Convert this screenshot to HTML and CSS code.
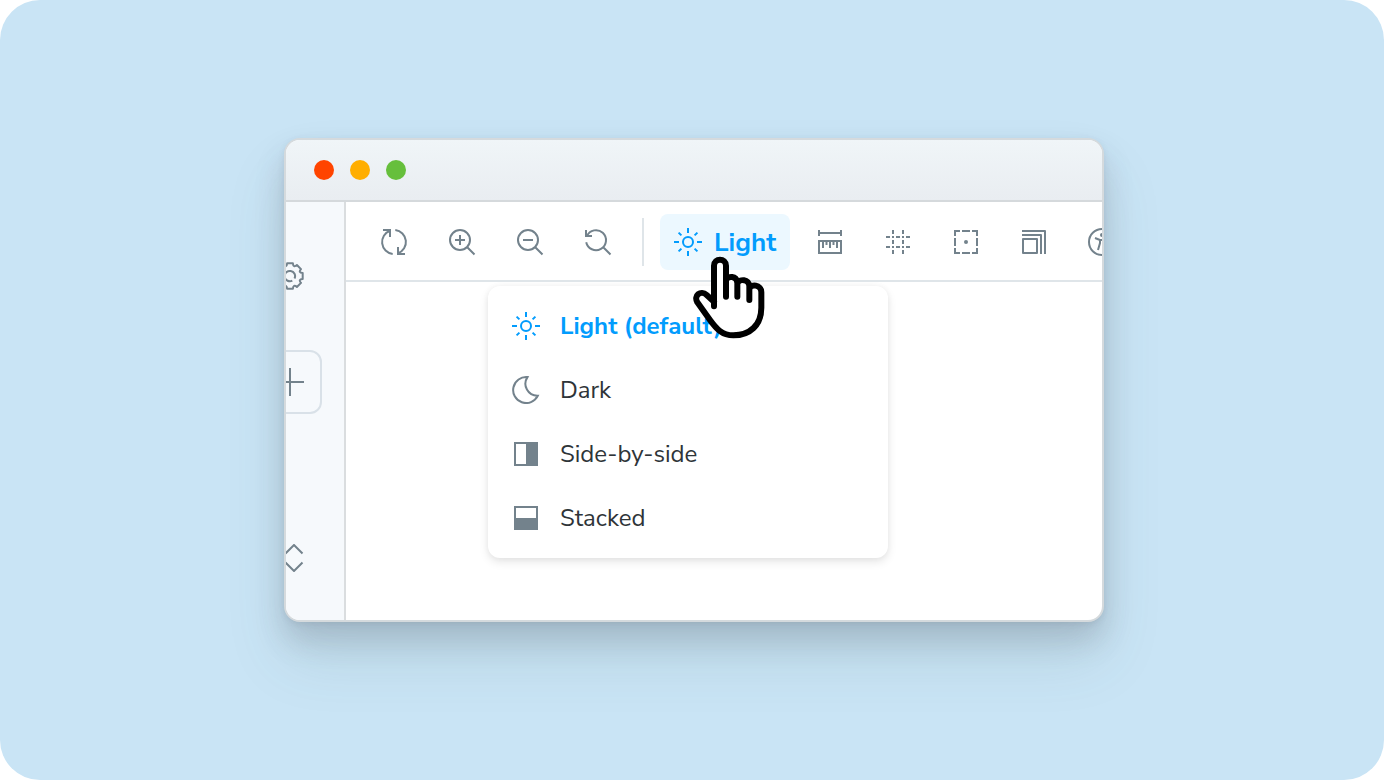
FILE: index.html
```html
<!DOCTYPE html>
<html lang="en">
<head>
<meta charset="utf-8">
<title>Theme switcher</title>
<link rel="stylesheet" href="styles.css">
</head>
<body>
<svg class="sprite" aria-hidden="true">
  <symbol id="sun" viewBox="0 0 28 28">
    <circle cx="14" cy="14" r="5"/>
    <path d="M14 0v5M14 23v5M0 14h5M23 14h5M4.600 4.600l2.800 2.800M20.600 20.600l2.800 2.800M4.600 23.400l2.800-2.800M20.600 7.400l2.800-2.800"/>
  </symbol>
</svg>
<main class="stage">
  <section class="window">
    <header class="titlebar">
      <span class="dot dot-close"></span>
      <span class="dot dot-minimize"></span>
      <span class="dot dot-expand"></span>
    </header>
    <div class="content">
      <aside class="sidebar">
        <button class="side-btn" aria-label="Settings">
          <svg class="icon" viewBox="0 0 28 28"><path stroke-linejoin="round" d="M18.500 16.500A5.200 5.200 0 1 0 16.300 18.700M26.700 11.100V16.900Q21.900 17.300 25 20.900L20.900 25Q17.300 21.900 16.900 26.700H11.100Q10.700 21.900 7.100 25L3 20.900Q6.100 17.300 1.300 16.900V11.100Q6.100 10.700 3 7.100L7.100 3Q10.700 6.100 11.100 1.300H16.900Q17.300 6.100 20.900 3L25 7.100Q21.900 10.700 26.700 11.100z"/></svg>
        </button>
        <button class="side-btn add-btn" aria-label="Add">
          <svg class="icon" viewBox="0 0 28 28"><path d="M14 0v28M0 14h28"/></svg>
        </button>
        <button class="side-btn expand-btn" aria-label="Expand all">
          <svg class="icon" viewBox="0 0 28 28"><path d="M5.500 9.500L14 1l8.500 8.500M5.500 18.500L14 27l8.500-8.500"/></svg>
        </button>
      </aside>
      <div class="main">
        <nav class="toolbar" aria-label="Canvas tools">
          <button class="tool" aria-label="Remount"><svg class="icon" viewBox="0 0 28 28"><path d="M10 2.700A12 12 0 0 0 12.700 25.900M15.300 2.100A12 12 0 0 1 18 25.300M3 2h7v7M18 19v7h7"/></svg></button>
          <button class="tool" aria-label="Zoom in"><svg class="icon" viewBox="0 0 28 28"><circle cx="12" cy="12" r="10"/><path d="M19 19l7.500 7.500M7 12h10M12 7v10"/></svg></button>
          <button class="tool" aria-label="Zoom out"><svg class="icon" viewBox="0 0 28 28"><circle cx="12" cy="12" r="10"/><path d="M19 19l7.500 7.500M7 12h10"/></svg></button>
          <button class="tool" aria-label="Reset zoom"><svg class="icon" viewBox="0 0 28 28"><path d="M2.200 14.200A10 10 0 1 0 2.900 8M2 2v6h6M19 19l7.500 7.500"/></svg></button>
          <span class="divider"></span>
          <button class="tool tool-active" aria-haspopup="menu" aria-expanded="true"><svg class="icon"><use href="#sun"/></svg>Light</button>
          <button class="tool" aria-label="Measure"><svg class="icon" viewBox="0 0 28 28"><path d="M3 2v6M25 2v6M3 5h22M3 13h22v12H3zM7 13v7M10.500 13v4M14 13v7M17.500 13v4M21 13v7"/></svg></button>
          <button class="tool" aria-label="Grid"><svg class="icon" viewBox="0 0 28 28"><path d="M9 2v4M9 8v2M9 12v4M9 18v2M9 22v4M19 2v4M19 8v2M19 12v4M19 18v2M19 22v4M2 9h4M8 9h2M12 9h4M18 9h2M22 9h4M2 19h4M8 19h2M12 19h4M18 19h2M22 19h4"/></svg></button>
          <button class="tool" aria-label="Outline"><svg class="icon" viewBox="0 0 28 28"><path d="M3 8V3h5M20 3h5v5M25 20v5h-5M8 25H3v-5M10 3h8M10 25h8M3 10v8M25 10v8"/><circle class="solid" cx="14" cy="14" r="2"/></svg></button>
          <button class="tool" aria-label="Viewport"><svg class="icon" viewBox="0 0 28 28"><path stroke-linejoin="round" d="M3 11h14v14H3zM2 7h19v19M2 3h23v23"/></svg></button>
          <button class="tool" aria-label="Accessibility"><svg class="icon" viewBox="0 0 28 28"><circle cx="14" cy="14" r="13"/><path d="M7 10l5 2v3l-2 7M21 10l-5 2v3l2 7M12 12h4"/><circle class="solid" cx="14" cy="7" r="2"/></svg></button>
        </nav>
        <div class="menu" role="menu">
          <button class="item item-active" role="menuitem"><svg class="icon"><use href="#sun"/></svg>Light (default)</button>
          <button class="item" role="menuitem"><svg class="icon" viewBox="0 0 28 28"><path d="M15.500 1.100A13 13 0 1 0 25.800 19.800A12 12 0 0 1 15.500 1.100z"/></svg>Dark</button>
          <button class="item" role="menuitem"><svg class="icon" viewBox="0 0 28 28"><path d="M3 3h22v22H3z"/><path class="solid" d="M14 2h12v24H14z"/></svg>Side-by-side</button>
          <button class="item" role="menuitem"><svg class="icon" viewBox="0 0 28 28"><path d="M3 3h22v22H3z"/><path class="solid" d="M2 14h24v12H2z"/></svg>Stacked</button>
        </div>
        <svg class="cursor" viewBox="120 144 240 264" aria-hidden="true"><path d="M192 304V182C192 158 228 158 228 182V275V226C232 212 262 211 262 234V275V235C268 221 298 221 298 244V285V252C302 236 334 238 334 262V308C334 360 300 391 250 391C216 391 198 370 180 345L142 292C130 272 152 254 170 270L192 290"/></svg>
      </div>
    </div>
  </section>
</main>
</body>
</html>
```
FILE: styles.css
```css
* { box-sizing: border-box; }
body {
  margin: 0;
  background: #fff;
  font-family: "Nunito Sans", "Open Sans", sans-serif;
  color: #2e3438;
}
button {
  margin: 0;
  padding: 0;
  border: 0;
  background: none;
  color: inherit;
  font: inherit;
  cursor: pointer;
}
.sprite { position: absolute; width: 0; height: 0; }
.icon {
  flex: none;
  display: block;
  width: 28px;
  height: 28px;
  fill: none;
  stroke: #73828c;
  stroke-width: 2;
}
.solid { fill: #73828c; stroke: none; }
.stage {
  display: flex;
  min-height: 100vh;
  padding: 138px 280px 158px 284px;
  border-radius: 40px;
  background: #c9e4f5;
}
.window {
  flex: 1;
  min-width: 0;
  display: flex;
  flex-direction: column;
  overflow: hidden;
  border: 2px solid #d5dadd;
  border-radius: 16px;
  background: #fff;
  box-shadow: 0 36px 60px rgba(60, 100, 90, 0.13), 0 18px 30px rgba(80, 70, 90, 0.2), 0 2px 6px rgba(70, 80, 100, 0.1);
}
.titlebar {
  display: flex;
  align-items: center;
  gap: 16px;
  height: 62px;
  padding: 0 28px;
  border-bottom: 2px solid #d5d9dc;
  background: linear-gradient(#f0f5f8, #e9edf1);
}
.dot { width: 20px; height: 20px; border-radius: 50%; }
.dot-close { background: #ff4400; }
.dot-minimize { background: #ffae00; }
.dot-expand { background: #66bf3c; }
.content { flex: 1; display: flex; min-height: 0; }
.sidebar {
  flex: none;
  display: flex;
  flex-direction: column;
  align-items: flex-start;
  width: 60px;
  padding-top: 60px;
  border-right: 2px solid #dadddf;
  background: #f6f9fc;
}
.side-btn { margin-left: -10px; }
.add-btn {
  margin-top: 60px;
  padding: 16px;
  border: 2px solid #d9e1e8;
  border-radius: 12px;
  margin-left: -28px;
}
.expand-btn { margin-top: 130px; margin-left: -6px; }
.main { position: relative; flex: 1; min-width: 0; }
.toolbar {
  display: flex;
  align-items: center;
  gap: 12px;
  height: 80px;
  padding: 2px 0 0 20px;
  overflow: hidden;
  border-bottom: 2px solid #dfe5e9;
}
.tool {
  flex: none;
  display: flex;
  align-items: center;
  gap: 12px;
  height: 56px;
  padding: 0 14px;
  border-radius: 8px;
}
.tool-active {
  background: #ecf8ff;
  color: #029cfd;
  font-size: 26px;
  font-weight: 700;
}
.tool-active .icon, .item-active .icon { stroke: #029cfd; }
.divider { flex: none; width: 2px; height: 48px; margin: 0 4px; background: #dfe5e9; }
.menu {
  position: absolute;
  top: 84px;
  left: 142px;
  width: 400px;
  padding: 8px 0;
  border-radius: 12px;
  background: #fff;
  box-shadow: 0 4px 10px rgba(0, 0, 0, 0.1), 0 0 6px rgba(0, 0, 0, 0.04);
}
.item {
  display: flex;
  align-items: center;
  gap: 20px;
  width: 100%;
  height: 64px;
  padding: 0 24px;
  font-size: 24px;
}
.item-active { color: #029cfd; font-weight: 700; }
.cursor {
  position: absolute;
  top: 51px;
  left: 344px;
  width: 80px;
  height: 88px;
  fill: #fff;
  stroke: #000;
  stroke-width: 18;
  stroke-linecap: round;
  stroke-linejoin: round;
  pointer-events: none;
}
```
